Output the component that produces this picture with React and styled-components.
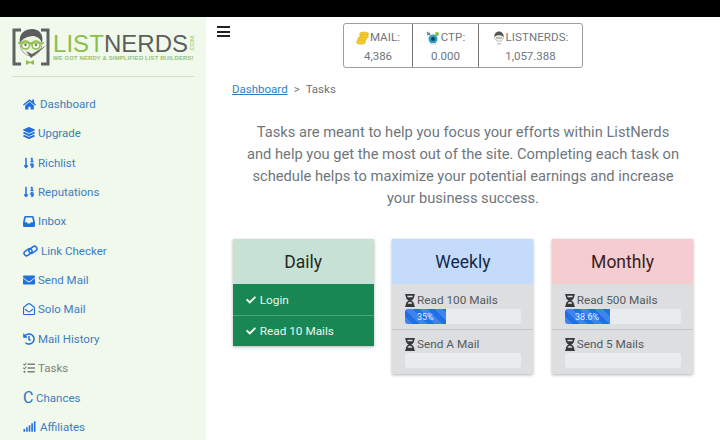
import React from 'react';
import styled, { createGlobalStyle } from 'styled-components';
import { FaHome, FaLayerGroup, FaSortNumericDown, FaEnvelope, FaRegEnvelopeOpen, FaHistory, FaTasks, FaSignal, FaCheck, FaHourglassHalf } from 'react-icons/fa';

const Global = createGlobalStyle`
  html, body { margin: 0; padding: 0; width: 720px; height: 440px; overflow: hidden; background: #fff; }
  * { box-sizing: border-box; }
  body { font-family: Roboto, "Liberation Sans", sans-serif; color: #6c757d; }
`;

const Page = styled.div`display: flex; flex-direction: column; height: 440px; overflow: hidden;`;
const StatusBar = styled.div`height: 17px; background: #000; flex: none;`;
const Body = styled.div`display: flex; flex: 1; min-height: 0;`;

const Sidebar = styled.aside`
  width: 206px; flex: none; background: #f1f9ec; padding: 10px 12px 0 12px; overflow: hidden;
`;
const LogoRow = styled.div`display: flex; align-items: center; height: 40px; margin-bottom: 9px;`;
const LogoWords = styled.div`display: flex; flex-direction: column; margin-left: 3px; position: relative; width: 142px;`;
const LogoTitle = styled.div`
  font-family: "Liberation Sans", sans-serif; font-size: 24px; line-height: 22px; letter-spacing: 0.05px; white-space: nowrap; color: #5c5f5c;
`;
const LogoGreen = styled.span`color: #8cbf4a;`;
const LogoCom = styled.span`
  position: absolute; right: -1px; top: 3px; font-size: 6px; line-height: 6px; color: #8cbf4a;
  font-family: "Liberation Sans", sans-serif; writing-mode: vertical-rl; transform: rotate(180deg);
`;
const Tagline = styled.div`
  font-family: "Liberation Sans", sans-serif; font-size: 5.95px; line-height: 7px; font-weight: 700; color: #9cbf72; white-space: nowrap; letter-spacing: 0.12px;
`;
const Divider = styled.hr`border: 0; border-top: 1px solid #d5dccc; margin: 0 0 12.4px 0; width: 182px;`;
const Nav = styled.nav`display: flex; flex-direction: column; padding-left: 11px;`;
const NavItem = styled.a`
  height: 29.35px; flex: none; display: flex; align-items: center; gap: ${p => p.$gap ?? 3}px; font-size: 11.5px;
  color: ${p => (p.$muted ? '#7b8279' : '#3d7cc0')};
  svg { color: ${p => (p.$muted ? '#7b8279' : '#1f6fe0')}; flex: none; }
`;
const CGlyph = styled.span`font-size: 16px; font-weight: 400; line-height: 1; color: #2f72c4; width: 10px;`;

const Main = styled.main`flex: 1; min-width: 0; padding: 0 27px 0 11px; display: flex; flex-direction: column;`;
const TopRow = styled.div`display: flex; align-items: flex-start; height: 52px; padding-top: 6px;`;
const Burger = styled.div`
  width: 13px; display: flex; flex-direction: column; gap: 2.5px; margin-top: 3px;
  span { display: block; height: 2px; background: #222; }
`;
const Stats = styled.div`
  display: flex; margin-left: 113px; height: 45px; border: 1px solid #9a9fa3; border-radius: 3px;
`;
const Stat = styled.div`
  width: ${p => p.$w}px; display: flex; flex-direction: column; align-items: center; font-size: 11.5px; color: #6f767c; padding-top: 6px; gap: 3.5px; line-height: 15px;
  & + & { border-left: 1px solid #777; }
`;
const StatLabel = styled.div`display: flex; align-items: center; gap: 1px; letter-spacing: 0.1px;`;
const Crumbs = styled.div`
  padding-left: 15px; font-size: 11.5px; display: flex; gap: 6px; height: 20px; align-items: center; margin-top: 10px; color: #6c757d;
`;
const CrumbLink = styled.a`color: #2f7ec4; text-decoration: underline;`;
const Intro = styled.p`
  margin: 22px 0 0 28px; width: 436px; align-self: flex-start; text-align: center; font-size: 14.7px; line-height: 22px; color: #6f767c;
`;
const Cards = styled.div`display: flex; gap: 18.7px; margin: 30px 0 0 15.7px; align-items: flex-start;`;
const Card = styled.div`
  width: 141px; box-shadow: 0 1px 3px rgba(0,0,0,.3); background: ${p => (p.$done ? '#198754' : '#dcdee0')};
`;
const CardHead = styled.div`
  height: 45px; display: flex; align-items: center; justify-content: center; font-size: 17.5px;
  background: ${p => p.$bg}; color: ${p => p.$fg};
`;
const DoneRow = styled.div`
  height: 31px; display: flex; align-items: center; gap: 4px; padding-left: 13px; color: #eaf5ee; font-size: 11.8px;
  & + & { border-top: 1px solid #4ea47c; }
`;
const TaskRow = styled.div`
  padding: 10px 12px 0 12.6px; height: 45px; font-size: 11.8px; color: #555b60;
  & + & { border-top: 1px solid #c2c5c8; padding-top: 8px; }
`;
const TaskLabel = styled.div`
  display: flex; align-items: center; gap: 2px; line-height: 13px;
  svg { color: #33393f; width: 10px; height: 13px; flex: none; }
`;
const Track = styled.div`height: 15px; margin-top: 2px; background: #e9ecef; border-radius: 3px; overflow: hidden; display: flex;`;
const Fill = styled.div`
  background-color: #1f6fe8; color: #e4efff; font-size: 9px; display: flex; align-items: center; justify-content: center;
  background-image: linear-gradient(45deg, rgba(255,255,255,.15) 25%, transparent 25%, transparent 50%, rgba(255,255,255,.15) 50%, rgba(255,255,255,.15) 75%, transparent 75%, transparent);
  background-size: 15px 15px;
`;

const LogoMark = () => (
  <svg width="38" height="38" viewBox="0 0 38 38" style={{ flex: 'none' }}>
    <path d="M9 2H2v34h7M29 2h7v34h-7" fill="none" stroke="#5f6360" strokeWidth="3" />
    <ellipse cx="19" cy="16" rx="11" ry="12" fill="#eef0e4" stroke="#777" strokeWidth=".6" />
    <path d="M8 15C6 5 14 1 20 1c7 0 12 5 10 14-2-5-5-7-10-7-5 1-9 2-12 7z" fill="#5a5d5b" />
    <circle cx="13.5" cy="17" r="4" fill="#f4f6e8" stroke="#8cbf4a" strokeWidth="1.6" />
    <circle cx="24" cy="17" r="4" fill="#f4f6e8" stroke="#8cbf4a" strokeWidth="1.6" />
    <path d="M6 15h26M17 16h3" stroke="#8cbf4a" strokeWidth="1.3" />
    <circle cx="13.5" cy="17" r="1.1" fill="#555" /><circle cx="24" cy="17" r="1.1" fill="#555" />
    <path d="M14 23l5 7 16-13-15 9z" fill="#5f6360" />
    <path d="M14 32l4 2 4-2v5l-4-2-4 2z" fill="#8cbf4a" />
  </svg>
);
const Coins = () => (
  <svg width="13" height="14" viewBox="0 0 13 14">
    <g fill="#f2cb2e" stroke="#d8a90f" strokeWidth=".5">
      <ellipse cx="8" cy="3" rx="4.5" ry="2" /><ellipse cx="8" cy="5.5" rx="4.5" ry="2" />
      <ellipse cx="6" cy="8" rx="4.5" ry="2" /><ellipse cx="5" cy="11" rx="4.5" ry="2.2" />
    </g>
  </svg>
);
const Ctp = () => (
  <svg width="14" height="14" viewBox="0 0 14 14">
    <circle cx="7" cy="8" r="4.5" fill="#2d9fc0" /><circle cx="7" cy="8" r="2" fill="#123f5a" />
    <path d="M1 1l3 3M1 4l3-2" stroke="#5a7f94" strokeWidth="1.3" />
    <circle cx="11" cy="3" r="2" fill="#8cbf4a" />
    <path d="M4 13h6" stroke="#d8dfe2" strokeWidth="1.5" />
  </svg>
);
const Nerd = () => (
  <svg width="12" height="14" viewBox="0 0 12 14">
    <circle cx="6" cy="6" r="4.5" fill="#f0efe6" stroke="#999" strokeWidth=".5" />
    <path d="M1.5 6C1 2 4 .5 6 .5s5 1.5 4.5 5.5C9 3.5 3 3.5 1.5 6z" fill="#555" />
    <path d="M3 7h6" stroke="#888" strokeWidth="1" />
    <path d="M4 12h4v1.5H4z" fill="#c9cfc0" />
  </svg>
);
const LinkIcon = () => (
  <svg width="15" height="12" viewBox="0 0 15 12" fill="none" stroke="currentColor" strokeWidth="1.5">
    <rect x="0.6" y="4.8" width="8.6" height="4.8" rx="2.4" transform="rotate(-35 5 7)" />
    <rect x="5.8" y="2.4" width="8.6" height="4.8" rx="2.4" transform="rotate(-35 10 5)" />
  </svg>
);
const InboxIcon = () => (
  <svg width="12" height="11" viewBox="0 0 12 11">
    <path d="M2.6 0h6.8a1.5 1.5 0 0 1 1.45 1.1L12 6.5v3A1.5 1.5 0 0 1 10.5 11h-9A1.5 1.5 0 0 1 0 9.5v-3L1.15 1.1A1.5 1.5 0 0 1 2.6 0z" fill="currentColor" />
    <path d="M2.8 1.5h6.4l1 4.7H8l-.8 1.4H4.8L4 6.2H1.8z" fill="#f1f9ec" />
  </svg>
);

const nav = [
  [<FaHome size={13} />, 'Dashboard', 4],
  [<FaLayerGroup size={12} />, 'Upgrade'],
  [<FaSortNumericDown size={12} />, 'Richlist'],
  [<FaSortNumericDown size={12} />, 'Reputations'],
  [<InboxIcon />, 'Inbox', 3],
  [<LinkIcon />, 'Link Checker', 3],
  [<FaEnvelope size={12} />, 'Send Mail'],
  [<FaRegEnvelopeOpen size={12} />, 'Solo Mail'],
  [<FaHistory size={12} />, 'Mail History'],
  [<FaTasks size={12} />, 'Tasks', 3, true],
  [<CGlyph>C</CGlyph>, 'Chances'],
  [<FaSignal size={13} />, 'Affiliates', 4],
];

const Progress = ({ label, pct, text }) => (
  <TaskRow>
    <TaskLabel><FaHourglassHalf />{label}</TaskLabel>
    <Track>{pct > 0 && <Fill style={{ width: `${pct}%` }}>{text}</Fill>}</Track>
  </TaskRow>
);

export default function App() {
  return (
    <Page>
      <Global />
      <StatusBar />
      <Body>
        <Sidebar>
          <LogoRow>
            <LogoMark />
            <LogoWords>
              <LogoTitle><LogoGreen>LIST</LogoGreen>NERDS</LogoTitle>
              <LogoCom>.COM</LogoCom>
              <Tagline>WE GOT NERDY &amp; SIMPLIFIED LIST BUILDERS!</Tagline>
            </LogoWords>
          </LogoRow>
          <Divider />
          <Nav>
            {nav.map(([icon, label, gap, muted]) => (
              <NavItem key={label} $gap={gap} $muted={muted}>{icon}{label}</NavItem>
            ))}
          </Nav>
        </Sidebar>
        <Main>
          <TopRow>
            <Burger><span /><span /><span /></Burger>
            <Stats>
              <Stat $w={68}><StatLabel><Coins />MAIL:</StatLabel><div>4,386</div></Stat>
              <Stat $w={66}><StatLabel><Ctp />CTP:</StatLabel><div>0.000</div></Stat>
              <Stat $w={104}><StatLabel><Nerd />LISTNERDS:</StatLabel><div>1,057.388</div></Stat>
            </Stats>
          </TopRow>
          <Crumbs><CrumbLink>Dashboard</CrumbLink><span>&gt;</span><span>Tasks</span></Crumbs>
          <Intro>Tasks are meant to help you focus your efforts within ListNerds and help you get the most out of the site. Completing each task on schedule helps to maximize your potential earnings and increase your business success.</Intro>
          <Cards>
            <Card $done>
              <CardHead $bg="#c7e1d4" $fg="#1f2a26">Daily</CardHead>
              <DoneRow><FaCheck size={10} />Login</DoneRow>
              <DoneRow><FaCheck size={10} />Read 10 Mails</DoneRow>
            </Card>
            <Card>
              <CardHead $bg="#c4dbfb" $fg="#13294b">Weekly</CardHead>
              <Progress label="Read 100 Mails" pct={35} text="35%" />
              <Progress label="Send A Mail" pct={0} />
            </Card>
            <Card>
              <CardHead $bg="#f5ccd0" $fg="#3c1c22">Monthly</CardHead>
              <Progress label="Read 500 Mails" pct={38.6} text="38.6%" />
              <Progress label="Send 5 Mails" pct={0} />
            </Card>
          </Cards>
        </Main>
      </Body>
    </Page>
  );
}
